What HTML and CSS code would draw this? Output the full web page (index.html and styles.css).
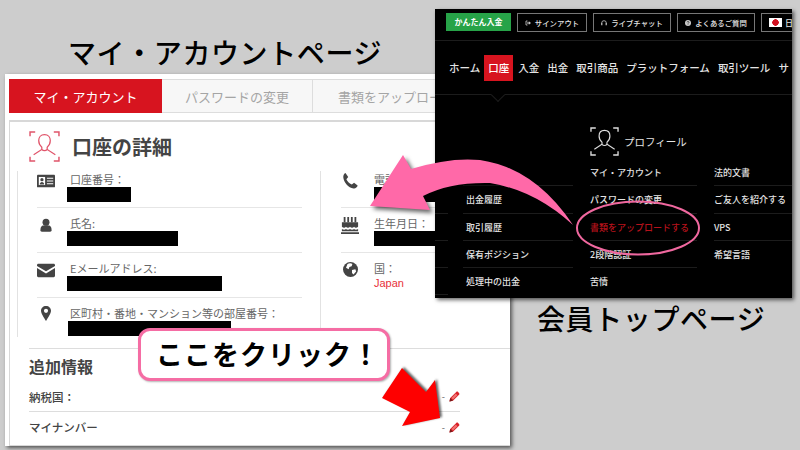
FILE: index.html
```html
<!DOCTYPE html>
<html>
<head>
    <title>マイ・アカウントページ</title>
    <link rel="stylesheet" href="styles.css">
</head>
<body>
    <svg class="defs" width="0" height="0">
        <symbol id="face" viewBox="0 0 30 30">
            <path d="M1 5V1h5M24 1h5v4M1 25v4h5M24 29h5v-4" fill="none" stroke="currentColor" stroke-width="1.4"/>
            <path d="M15 3.500c-3.600 0-5.600 2.600-5.600 5.800 0 2.600 1.300 5 3 6.400v2.200L4.500 23M15 3.500c3.600 0 5.600 2.600 5.600 5.800 0 2.600-1.300 5-3 6.400v2.200l7.900 5M12.400 17.900c1.500 1.600 3.700 1.600 5.200 0" fill="none" stroke="currentColor" stroke-width="1.2"/>
        </symbol>
        <symbol id="pencil" viewBox="0 0 12 12">
            <path d="M.5 11.500l.8-3.800L7.900 1.100c.6-.6 1.400-.6 2 0l1 1c.6.6.6 1.400 0 2L4.300 10.700z" fill="#d8232a"/>
            <path d="M2.600 7.600l4.800-4.800 1.800 1.800-4.800 4.800z" fill="#f0716f"/>
            <path d="M.5 11.500l.8-3.800 3 3z" fill="#7a1a1a"/>
        </symbol>
    </svg>

    <h2 class="caption caption-account">マイ・アカウントページ</h2>
    <h2 class="caption caption-member">会員トップページ</h2>

    <!-- マイ・アカウント画面 -->
    <div class="shot account">
        <div class="tabs">
            <div class="tab tab-active">マイ・アカウント</div>
            <div class="tab">パスワードの変更</div>
            <div class="tab tab-last">書類をアップロード</div>
        </div>
        <div class="detail">
            <div class="detail-head">
                <svg class="face-icon"><use href="#face"/></svg>
                <h1>口座の詳細</h1>
            </div>
            <div class="cols">
                <div class="col col-left">
                    <div class="row row-first">
                        <svg class="ico" viewBox="0 0 20 16"><path d="M1 1h18a1 1 0 0 1 1 1v12a1 1 0 0 1-1 1H1a1 1 0 0 1-1-1V2a1 1 0 0 1 1-1z" fill="#444"/><rect x="2" y="3.500" width="7" height="9" fill="#fff"/><circle cx="5.500" cy="6.500" r="1.800" fill="#444"/><path d="M3 12c0-4 5-4 5 0z" fill="#444"/><path d="M11 5h7M11 8h7M11 11h7" stroke="#fff" stroke-width="1.2"/></svg>
                        <div class="field">
                            <div class="label">口座番号：</div>
                            <div class="mask mask-a"></div>
                        </div>
                    </div>
                    <div class="row">
                        <svg class="ico ico-small" viewBox="0 0 20 20"><circle cx="10" cy="6" r="5" fill="#444"/><path d="M2 18c0-7 3-7.500 8-7.500s8 .5 8 7.500c0 1-1 1.500-2 1.500H4c-1 0-2-.5-2-1.500z" fill="#444"/></svg>
                        <div class="field">
                            <div class="label">氏名:</div>
                            <div class="mask mask-b"></div>
                        </div>
                    </div>
                    <div class="row">
                        <svg class="ico" viewBox="0 0 20 16"><path d="M1.500 1h17c.8 0 1.500.7 1.500 1.500v1L10 9.500 0 3.500v-1C0 1.700.7 1 1.500 1zM0 5.800l10 6 10-6v8.700c0 .8-.7 1.500-1.500 1.500h-17C.7 16 0 15.300 0 14.500z" fill="#444"/></svg>
                        <div class="field">
                            <div class="label">Eメールアドレス:</div>
                            <div class="mask mask-c"></div>
                        </div>
                    </div>
                    <div class="row row-last">
                        <svg class="ico ico-pin" viewBox="0 0 12 18"><path fill-rule="evenodd" d="M6 0c3.500 0 6 2.500 6 5.800C12 9 8.500 14 6 18 3.500 14 0 9 0 5.800 0 2.500 2.500 0 6 0zm0 3.300a2.500 2.500 0 1 0 0 5 2.500 2.500 0 0 0 0-5z" fill="#444"/></svg>
                        <div class="field">
                            <div class="label">区町村・番地・マンション等の部屋番号：</div>
                            <div class="mask mask-d"></div>
                        </div>
                    </div>
                </div>
                <div class="col col-right">
                    <div class="row row-first">
                        <svg class="ico" viewBox="0 0 20 20"><path d="M5 1l3 4.500-2 2.500c1 2.500 3 4.500 6 6l2.500-2 4 3c-.5 2-2.500 3.500-4.500 3.200C8 17.500 3 11.500 2.500 5.500 2.500 3.500 3.500 1.500 5 1z" fill="#444"/></svg>
                        <div class="field">
                            <div class="label">電話番号：</div>
                            <div class="mask mask-e"></div>
                        </div>
                    </div>
                    <div class="row">
                        <svg class="ico" viewBox="0 0 20 20"><path d="M4 1v6M8 1v6M12 1v6M16 1v6" stroke="#444" stroke-width="2"/><path d="M1 7h18v5c-1.500 1.500-3.500 1.500-4.500 0-1 1.500-3.500 1.500-4.500 0-1 1.500-3.500 1.500-4.500 0C4.500 13.500 2.500 13.500 1 12zM1 14.500c1.500 1 3.500 1 4.500 0 1 1 3.500 1 4.500 0 1 1 3.500 1 4.500 0 1 1 3 1 4.500 0V17H1zM0 18h20v2H0z" fill="#444"/></svg>
                        <div class="field">
                            <div class="label">生年月日：</div>
                            <div class="mask mask-f"></div>
                        </div>
                    </div>
                    <div class="row row-last">
                        <svg class="ico ico-globe" viewBox="0 0 20 20"><circle cx="10" cy="10" r="10" fill="#444"/><path d="M6 2.500c2-1 5-1 6.500 0l-1 3-3 1-1 3-3.500-2zM12 10.500l4.500-1 1 3-3.500 4-2-2z" fill="#fff"/></svg>
                        <div class="field">
                            <div class="label">国：</div>
                            <div class="country">Japan</div>
                        </div>
                    </div>
                </div>
            </div>
            <div class="extra">
                <h3>追加情報</h3>
                <div class="extra-row extra-line">
                    <span>納税国：</span>
                    <span class="edit"><i>-</i><svg class="pencil"><use href="#pencil"/></svg></span>
                </div>
                <div class="extra-row">
                    <span>マイナンバー</span>
                    <span class="edit"><i>-</i><svg class="pencil"><use href="#pencil"/></svg></span>
                </div>
            </div>
        </div>
    </div>

    <!-- 会員トップ画面 -->
    <div class="shot member">
        <div class="topbar">
            <span class="btn-green">かんたん入金</span>
            <span class="btn-line btn-signout">
                <svg class="btn-icon" viewBox="0 0 6 6"><path d="M2.500 1H1v4h1.500" fill="none" stroke="#ccc" stroke-width=".8"/><path d="M2 2.400h1.800V1.200L6 3 3.800 4.800V3.600H2z" fill="#ccc"/></svg>
                サインアウト
            </span>
            <span class="btn-line btn-chat">
                <svg class="btn-icon" viewBox="0 0 6 6"><path d="M.7 4V3a2.300 2.300 0 0 1 4.600 0v1" fill="none" stroke="#ccc" stroke-width=".8"/><path d="M.2 3.200h1.200v2H.2zM4.600 3.200h1.200v2H4.600z" fill="#ccc"/></svg>
                ライブチャット
            </span>
            <span class="btn-line btn-faq">
                <svg class="btn-icon" viewBox="0 0 6 6"><circle cx="3" cy="3" r="3" fill="#ccc"/><path d="M2 2.300c0-1.100 2-1.100 2 0 0 .7-1 .7-1 1.400" fill="none" stroke="#000" stroke-width=".6"/><circle cx="3" cy="4.700" r=".4" fill="#000"/></svg>
                よくあるご質問
            </span>
            <span class="btn-line btn-lang"><b class="flag"></b>日</span>
        </div>
        <div class="nav">
            <span>ホーム</span>
            <span class="nav-on">口座</span>
            <span>入金</span>
            <span>出金</span>
            <span>取引商品</span>
            <span>プラットフォーム</span>
            <span>取引ツール</span>
            <span>サ</span>
        </div>
        <div class="notch"></div>
        <div class="profile">
            <svg class="profile-icon"><use href="#face"/></svg>
            <span>プロフィール</span>
        </div>
        <div class="menu">
            <div class="menu-col menu-edge">
                <div class="item"></div>
                <div class="item"></div>
                <div class="item"></div>
                <div class="item"></div>
            </div>
            <div class="menu-col menu-a">
                <div class="item"></div>
                <div class="item">出金履歴</div>
                <div class="item">取引履歴</div>
                <div class="item">保有ポジション</div>
                <div class="item item-end">処理中の出金</div>
            </div>
            <div class="menu-col menu-b">
                <div class="item">マイ・アカウント</div>
                <div class="item">パスワードの変更</div>
                <div class="item item-on">書類をアップロードする</div>
                <div class="item">2段階認証</div>
                <div class="item item-end">苦情</div>
            </div>
            <div class="menu-col menu-c">
                <div class="item">法的文書</div>
                <div class="item">ご友人を紹介する</div>
                <div class="item">VPS</div>
                <div class="item item-end">希望言語</div>
            </div>
        </div>
    </div>

    <!-- 注釈 -->
    <svg class="marks" width="800" height="450" viewBox="0 0 800 450">
        <path class="pink-arrow" d="M370 206L403 155L411 169Q450 157 480 160Q535 168 573 225Q535 190 490 183Q450 182 423 196L430 210Z"/>
        <ellipse class="ring" cx="638" cy="228" rx="61" ry="26.500"/>
        <path class="red-arrow" d="M402 368L382 398L410 412L402 426L440 418L435 380L426 392Z"/>
    </svg>
    <div class="callout">ここをクリック！</div>
</body>
</html>
```

FILE: styles.css
```css
* {
    box-sizing: border-box;
}

html,
body {
    margin: 0;
    height: 450px;
    overflow: hidden;
}

body {
    position: relative;
    width: 800px;
    background-color: #cdcdcd;
    font-family: "Noto Sans CJK JP", "Liberation Sans", sans-serif;
    color: #444;
}

.defs {
    position: absolute;
}

.caption {
    position: absolute;
    margin: 0;
    font-size: 28px;
    line-height: 36px;
    font-weight: 500;
    color: #000;
    white-space: nowrap;
}

.caption-account {
    left: 68px;
    top: 34px;
    letter-spacing: .6px;
}

.caption-member {
    left: 537px;
    top: 300px;
    letter-spacing: .6px;
}

.shot {
    position: absolute;
    overflow: hidden;
    box-shadow: 2px 2px 4px rgba(0, 0, 0, 0.6);
}

/* account page */
.account {
    left: 5px;
    top: 74px;
    width: 505px;
    height: 372px;
    padding: 5px 0 2px 4px;
    background-color: #fff;
}

.tabs {
    display: flex;
    height: 34px;
}

.tab {
    width: 151px;
    padding-top: 7px;
    text-align: center;
    font-size: 13px;
    line-height: 19px;
    color: #a5a5a5;
    background-color: #f7f7f7;
    border: 1px solid #ddd;
    border-left: 0;
    white-space: nowrap;
}

.tab-active {
    width: 153px;
    color: #fff;
    background-color: #d7141f;
    border: 0;
    padding-top: 8px;
}

.tab-last {
    flex: 1;
    text-align: left;
    padding-left: 25px;
    overflow: hidden;
}

.detail {
    height: 326px;
    margin-top: 7px;
    border: 1px solid #d8d8d8;
    border-top-width: 2px;
    border-right: 0;
}

.detail-head {
    display: flex;
    align-items: center;
    gap: 12px;
    height: 49px;
    padding-left: 19px;
}

.face-icon {
    width: 31px;
    height: 31px;
    color: #e0546a;
}

h1 {
    margin: 0;
    font-size: 20px;
    line-height: 28px;
    font-weight: 700;
    color: #444;
}

.cols {
    display: flex;
    height: 166px;
    margin-left: 7px;
}

.col-left {
    width: 304px;
    padding: 0 18px 0 19px;
    border-left: 1px solid #e2e2e2;
    border-right: 1px solid #e2e2e2;
}

.col-right {
    width: 150px;
    padding-left: 20px;
}

.row {
    display: flex;
    height: 45px;
    padding-top: 8px;
    border-bottom: 1px solid #e6e6e6;
}

.row-first {
    height: 37px;
    padding-top: 1px;
}

.row-last {
    border-bottom: 0;
}

.ico {
    flex: none;
    width: 18px;
    height: 18px;
    margin-right: 12px;
}

.ico-small {
    width: 14px;
    margin: 0 14px 0 2px;
}

.ico-pin {
    width: 10px;
    height: 15px;
    margin: 0 16px 0 4px;
}

.ico-globe {
    width: 15px;
    height: 15px;
    margin: 1px 13px 0 2px;
}

.field {
    margin-left: 3px;
}

.label {
    font-size: 11px;
    line-height: 15px;
    color: #666;
    white-space: nowrap;
}

.mask {
    height: 15px;
    margin-left: -3px;
    background-color: #000;
}

.mask-a {
    width: 64px;
}

.mask-b {
    width: 111px;
}

.mask-c {
    width: 155px;
}

.mask-d {
    width: 163px;
    margin-left: -2px;
}

.mask-e,
.mask-f {
    width: 70px;
    margin-left: 0;
}

.country {
    font-family: "Liberation Sans", sans-serif;
    font-size: 11px;
    line-height: 15px;
    color: #e8323a;
}

.extra {
    margin: 11px 0 0 19px;
    padding-top: 6px;
    border-top: 1px solid #ddd;
}

h3 {
    margin: 0;
    font-size: 16px;
    line-height: 22px;
    font-weight: 700;
    color: #444;
}

.extra-row {
    display: flex;
    justify-content: space-between;
    align-items: center;
    width: 431px;
    height: 30px;
    font-size: 11.5px;
    font-weight: 500;
    color: #444;
}

h3 + .extra-row {
    margin-top: 5px;
}

.extra-line {
    border-bottom: 1px solid #ddd;
}

.edit {
    display: flex;
    align-items: center;
    gap: 4px;
}

.edit i {
    font-style: normal;
    font-size: 9px;
    color: #777;
}

.pencil {
    width: 11px;
    height: 11px;
}

/* member page */
.member {
    left: 435px;
    top: 9px;
    width: 357px;
    height: 289px;
    padding-top: 4px;
    background-color: #000;
    color: #e4e4e4;
}

.topbar {
    display: flex;
    gap: 6px;
    height: 27px;
    padding-left: 11px;
    white-space: nowrap;
}

.btn-green {
    flex: none;
    width: 65px;
    height: 18px;
    text-align: center;
    font-size: 8px;
    line-height: 18px;
    font-weight: 700;
    color: #fff;
    background-color: #27a348;
}

.btn-line {
    display: flex;
    flex: none;
    align-items: center;
    justify-content: center;
    gap: 4px;
    height: 19px;
    font-size: 7.4px;
    font-weight: 500;
    border: 1px solid #777;
}

.btn-signout {
    width: 70px;
}

.btn-chat,
.btn-faq {
    width: 78px;
}

.btn-lang {
    width: 33px;
    justify-content: flex-start;
    gap: 3px;
    padding-left: 7px;
    font-size: 8px;
    border-right: 0;
}

.btn-icon {
    flex: none;
    width: 6px;
    height: 6px;
}

.flag {
    flex: none;
    width: 13px;
    height: 9px;
    background: radial-gradient(circle, #d01020 3px, #fff 3.5px);
}

.nav {
    display: flex;
    align-items: center;
    gap: 8px;
    height: 55px;
    padding-left: 14px;
    font-size: 10.5px;
    font-weight: 500;
    white-space: nowrap;
    border-top: 1px solid #1c1c1c;
    border-bottom: 1px solid #1c1c1c;
}

.nav span {
    flex: none;
}

.nav .nav-on {
    width: 29px;
    height: 26px;
    margin: 0 -3px 0 -4px;
    text-align: center;
    line-height: 26px;
    color: #fff;
    background-color: #d7141f;
}

.notch {
    width: 10px;
    height: 10px;
    margin: -5px 0 0 58px;
    background-color: #000;
    border-right: 1px solid #1c1c1c;
    border-bottom: 1px solid #1c1c1c;
    transform: rotate(45deg);
}

.profile {
    display: flex;
    align-items: center;
    gap: 5px;
    margin: 27px 0 0 155px;
    font-size: 10.5px;
}

.profile-icon {
    width: 29px;
    height: 29px;
    color: #ddd;
}

.menu {
    display: flex;
    margin-top: 3px;
}

.menu-col {
    flex: none;
}

.menu-edge {
    width: 13px;
    margin-top: 27.3px;
}

.menu-a {
    width: 127px;
    margin-left: 15px;
}

.menu-b {
    width: 124px;
}

.menu-c {
    width: 78px;
}

.item {
    height: 27.3px;
    font-size: 9px;
    line-height: 27px;
    font-weight: 500;
    white-space: nowrap;
    border-bottom: 1px solid #1c1c1c;
}

.menu-a .item {
    width: 110px;
    padding-left: 3px;
}

.menu-b .item {
    width: 107px;
}

.menu .item-end {
    border-bottom: 0;
}

.menu .item-on {
    color: #b5121b;
}

/* annotations */
.marks {
    position: absolute;
    left: 0;
    top: 0;
}

.pink-arrow {
    fill: #ff69a8;
    filter: drop-shadow(3px 3px 2px rgba(0, 0, 0, 0.6));
}

.ring {
    fill: none;
    stroke: #f0689f;
    stroke-width: 2;
}

.red-arrow {
    fill: #fe0000;
    filter: drop-shadow(2px -1px 1px rgba(0, 0, 0, 0.6));
}

.callout {
    position: absolute;
    left: 138px;
    top: 328px;
    width: 252px;
    height: 53px;
    padding-left: 15px;
    font-size: 27px;
    line-height: 46px;
    font-weight: 700;
    letter-spacing: 1px;
    color: #000;
    white-space: nowrap;
    background-color: #fff;
    border: 3px solid #f56da4;
    border-radius: 12px;
    box-shadow: 1px 1px 2px rgba(0, 0, 0, 0.3);
}
```
